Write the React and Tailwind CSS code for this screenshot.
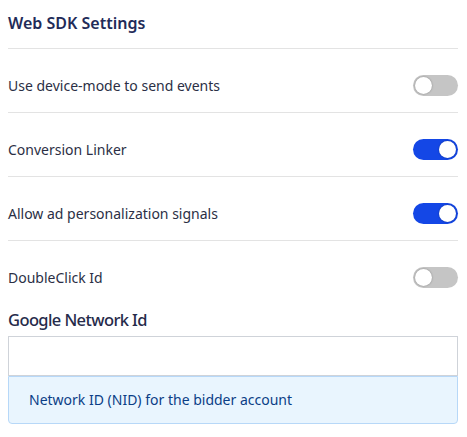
import React, { useState } from 'react';

function Toggle({ on, onChange }) {
  return (
    <button
      type="button"
      onClick={() => onChange(!on)}
      className={`relative h-[21px] w-[45px] rounded-full ${on ? 'bg-[#1447e6]' : 'bg-[#c5c5c5]'}`}
    >
      <span
        className={`absolute top-[2px] h-[17px] w-[17px] rounded-full bg-white shadow-[0_0_2px_rgba(0,0,0,0.35)] ${on ? 'left-[26px]' : 'left-[2px]'}`}
      />
    </button>
  );
}

const rows = [
  { label: 'Use device-mode to send events', on: false },
  { label: 'Conversion Linker', on: true },
  { label: 'Allow ad personalization signals', on: true },
  { label: 'DoubleClick Id', on: false },
];

export default function App() {
  const [values, setValues] = useState(rows.map(r => r.on));
  const [nid, setNid] = useState('');

  return (
    <div className="w-[467px] bg-white pl-2 pr-[9px] text-[#2b2f45]" style={{ fontFamily: '"Noto Sans", "Open Sans", sans-serif' }}>
      <h2 className="pt-[10px] pb-[12px] text-[16px] font-semibold leading-[26px] text-[#222b58]">Web SDK Settings</h2>
      {rows.map((r, i) => (
        <div
          key={r.label}
          className={`flex items-center justify-between border-t border-[#e3e3e3] pt-[10px] ${i === rows.length - 1 ? 'h-[68px] pb-[4px]' : 'h-[64px]'}`}
        >
          <span className="text-[14px] text-[#2b2f45]">{r.label}</span>
          <Toggle
            on={values[i]}
            onChange={v => setValues(values.map((x, j) => (j === i ? v : x)))}
          />
        </div>
      ))}
      <label className="block pb-[4px] text-[16.5px] font-medium leading-[24px] tracking-[-0.6px] text-[#262b4a]">Google Network Id</label>
      <input
        type="text"
        value={nid}
        onChange={e => setNid(e.target.value)}
        className="block h-[40px] w-full border border-[#cfd3d9] bg-white px-3 text-[14px] outline-none"
      />
      <div className="rounded-b-[4px] border border-[#b7d8f8] bg-[#e9f5fe] px-5 py-[12px] text-[14px] leading-[22px] text-[#0b3e86]">
        Network ID (NID) for the bidder account
      </div>
    </div>
  );
}
